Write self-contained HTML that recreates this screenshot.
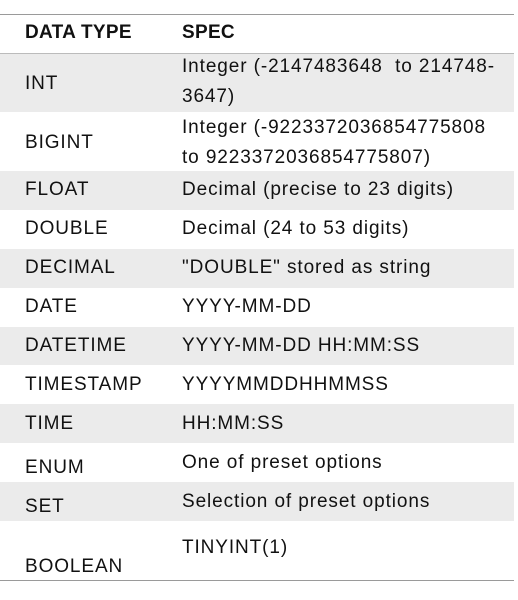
<!DOCTYPE html>
<html><head><style>
body{margin:0;width:518px;height:600px;background:#fff;position:relative;overflow:hidden;font-family:"Liberation Sans",Arial,sans-serif;color:#111;font-size:19px;letter-spacing:0.9px;}
.r{position:absolute;left:0;width:514px;}
.g{background:#ebebeb;}
.t{position:absolute;white-space:nowrap;line-height:30px;}
.a{left:25px}.b{left:182px}
.line{position:absolute;left:0;width:514px;height:1px;background:#9a9a9a;}
</style></head><body>
<div class="line" style="top:14px"></div>
<div class="line" style="top:53px;background:#bbb"></div>
<div class="r g" style="top:54px;height:58px"></div>
<div class="r g" style="top:171px;height:39px"></div>
<div class="r g" style="top:249px;height:39px"></div>
<div class="r g" style="top:327px;height:38px"></div>
<div class="r g" style="top:404px;height:39px"></div>
<div class="r g" style="top:482px;height:39px"></div>
<div class="line" style="top:580px"></div>

<div class="t a" style="top:18px;font-weight:bold;letter-spacing:0.3px">DATA TYPE</div>
<div class="t b" style="top:18px;font-weight:bold;letter-spacing:0.3px">SPEC</div>

<div class="t a" style="top:69px">INT</div>
<div class="t b" style="top:52px">Integer (-2147483648&nbsp; to 214748-</div>
<div class="t b" style="top:82px">3647)</div>

<div class="t a" style="top:128px">BIGINT</div>
<div class="t b" style="top:113px">Integer (-9223372036854775808</div>
<div class="t b" style="top:143px">to 9223372036854775807)</div>

<div class="t a" style="top:175px">FLOAT</div>
<div class="t b" style="top:175px">Decimal (precise to 23 digits)</div>
<div class="t a" style="top:214px">DOUBLE</div>
<div class="t b" style="top:214px">Decimal (24 to 53 digits)</div>
<div class="t a" style="top:253px">DECIMAL</div>
<div class="t b" style="top:253px">"DOUBLE" stored as string</div>
<div class="t a" style="top:292px">DATE</div>
<div class="t b" style="top:292px">YYYY-MM-DD</div>
<div class="t a" style="top:331px">DATETIME</div>
<div class="t b" style="top:331px">YYYY-MM-DD HH:MM:SS</div>
<div class="t a" style="top:370px">TIMESTAMP</div>
<div class="t b" style="top:370px">YYYYMMDDHHMMSS</div>
<div class="t a" style="top:409px">TIME</div>
<div class="t b" style="top:409px">HH:MM:SS</div>
<div class="t a" style="top:453px">ENUM</div>
<div class="t b" style="top:448px">One of preset options</div>
<div class="t a" style="top:492px">SET</div>
<div class="t b" style="top:487px">Selection of preset options</div>
<div class="t a" style="top:552px">BOOLEAN</div>
<div class="t b" style="top:533px">TINYINT(1)</div>
</body></html>
